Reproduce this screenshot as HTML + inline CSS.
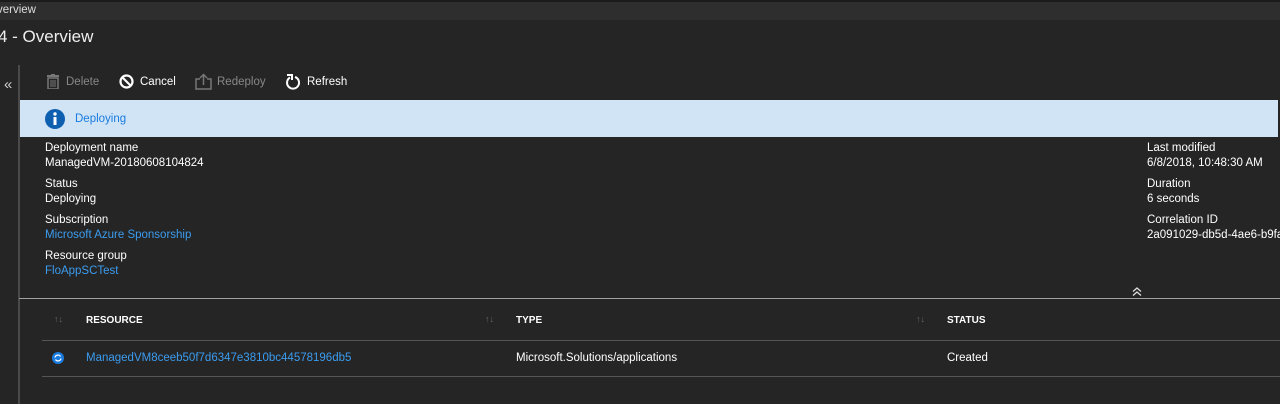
<!DOCTYPE html>
<html><head><style>
body{margin:0;width:1280px;height:404px;background:#252525;overflow:hidden;font-family:"Liberation Sans",sans-serif;color:#fff;position:relative}
.a{position:absolute;white-space:nowrap}
.s12{font-size:11.5px}
.lnk{color:#3b9cf0}
</style></head><body>
<div class="a" style="left:0;top:0;width:1280px;height:2px;background:#1b1b1b"></div>
<div class="a" style="left:0;top:2px;width:1280px;height:18px;background:#2e2e2e"></div>
<div class="a s12" style="left:-3px;top:4px;color:#ddd">verview</div>
<div class="a" style="left:-2px;top:27px;font-size:17px;color:#eee">4 - Overview</div>
<div class="a" style="left:18px;top:65px;width:2px;height:339px;background:#4a4a4a"></div>
<div class="a" style="left:4px;top:76px;font-size:15px;color:#ccc">«</div>
<svg class="a" style="left:47px;top:74px" width="12" height="15" viewBox="0 0 12 15"><rect x="0" y="1" width="12" height="2" fill="#777"/><rect x="4" y="0" width="4" height="1" fill="#777"/><rect x="1" y="4" width="10" height="11" fill="none" stroke="#777" stroke-width="1.5"/><path d="M4 6v7M6 6v7M8 6v7" stroke="#777"/></svg>
<div class="a s12" style="left:66px;top:76px;color:#888">Delete</div>
<svg class="a" style="left:119px;top:74px" width="15" height="15" viewBox="0 0 15 15"><circle cx="7.5" cy="7.5" r="6" fill="none" stroke="#fff" stroke-width="2.2"/><path d="M3.5 3.5l8 8" stroke="#fff" stroke-width="2.2"/></svg>
<div class="a s12" style="left:140px;top:76px">Cancel</div>
<svg class="a" style="left:195px;top:73px" width="17" height="17" viewBox="0 0 17 17"><path d="M5 6H1v10h15V6h-4" fill="none" stroke="#777" stroke-width="1.5"/><path d="M8.5 12V2M5 5l3.5-3.5L12 5" fill="none" stroke="#777" stroke-width="1.5"/></svg>
<div class="a s12" style="left:217px;top:76px;color:#888">Redeploy</div>
<svg class="a" style="left:285px;top:73px" width="16" height="17" viewBox="0 0 16 17"><path d="M5 4.5A6 6 0 1 0 10 4" fill="none" stroke="#fff" stroke-width="2"/><path d="M2 2h5v5" fill="none" stroke="#fff" stroke-width="2"/></svg>
<div class="a s12" style="left:307px;top:76px">Refresh</div>
<div class="a" style="left:20px;top:100px;width:1258px;height:37px;background:#d0e4f5"></div>
<svg class="a" style="left:45px;top:109px" width="20" height="20" viewBox="0 0 20 20"><circle cx="10" cy="10" r="10" fill="#0f5fb0"/><rect x="8.5" y="8" width="3" height="8" fill="#fff"/><circle cx="10" cy="5" r="1.7" fill="#fff"/></svg>
<div class="a s12" style="left:75px;top:113px;color:#1a7ce0">Deploying</div>
<div class="a s12" style="left:45px;top:141px;line-height:15px">Deployment name<br>ManagedVM-20180608104824</div>
<div class="a s12" style="left:45px;top:177px;line-height:15px">Status<br>Deploying</div>
<div class="a s12" style="left:45px;top:213px;line-height:15px">Subscription<br><span class="lnk">Microsoft Azure Sponsorship</span></div>
<div class="a s12" style="left:45px;top:249px;line-height:15px">Resource group<br><span class="lnk">FloAppSCTest</span></div>
<div class="a s12" style="left:1147px;top:141px;line-height:15px">Last modified<br>6/8/2018, 10:48:30 AM</div>
<div class="a s12" style="left:1147px;top:177px;line-height:15px">Duration<br>6 seconds</div>
<div class="a s12" style="left:1147px;top:213px;line-height:15px">Correlation ID<br>2a091029-db5d-4ae6-b9fa</div>
<svg class="a" style="left:1132px;top:287px" width="10" height="9" viewBox="0 0 10 9"><path d="M1 4.5l4-3.5 4 3.5M1 8.5l4-3.5 4 3.5" fill="none" stroke="#ddd" stroke-width="1.3"/></svg>
<div class="a" style="left:19px;top:298px;width:1261px;height:1px;background:#a0a0a0"></div>
<div class="a" style="left:54px;top:314px;font-size:9px;color:#666">↑↓</div>
<div class="a" style="left:485px;top:314px;font-size:9px;color:#666">↑↓</div>
<div class="a" style="left:916px;top:314px;font-size:9px;color:#666">↑↓</div>
<div class="a" style="left:86px;top:315px;font-size:10px;font-weight:bold">RESOURCE</div>
<div class="a" style="left:516px;top:315px;font-size:10px;font-weight:bold">TYPE</div>
<div class="a" style="left:947px;top:315px;font-size:10px;font-weight:bold">STATUS</div>
<div class="a" style="left:42px;top:340px;width:1238px;height:1px;background:#555"></div>
<svg class="a" style="left:52px;top:352px" width="12" height="12" viewBox="0 0 12 12"><circle cx="6" cy="6" r="6" fill="#1a7ce0"/><path d="M3 5.5a3 3 0 0 1 5.5-1M9 6.5a3 3 0 0 1-5.5 1" fill="none" stroke="#fff" stroke-width="1.2"/></svg>
<div class="a s12 lnk" style="left:86px;top:352px">ManagedVM8ceeb50f7d6347e3810bc44578196db5</div>
<div class="a s12" style="left:516px;top:352px">Microsoft.Solutions/applications</div>
<div class="a s12" style="left:947px;top:352px">Created</div>
<div class="a" style="left:42px;top:376px;width:1238px;height:1px;background:#555"></div>
</body></html>
